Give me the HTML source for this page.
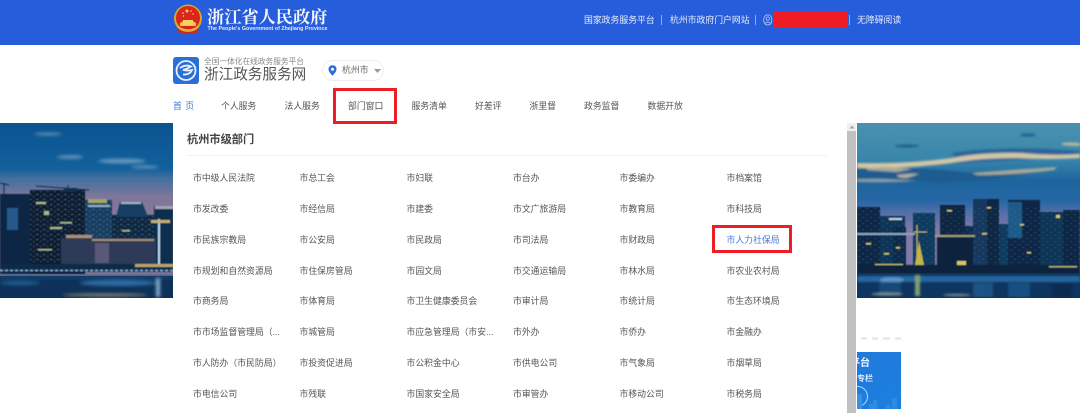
<!DOCTYPE html>
<html lang="zh-CN">
<head>
<meta charset="utf-8">
<title>浙江政务服务网</title>
<style>
html,body{margin:0;padding:0;background:#fff}
body{width:1080px;height:413px;overflow:hidden;position:relative;font-family:"Liberation Sans","Noto Sans CJK SC",sans-serif;color:#555}
.a{position:absolute;white-space:nowrap;line-height:1}
#head{position:absolute;left:0;top:0;width:1080px;height:45px;background:#265ddb}
.w{color:#e6edfb;font-size:8.85px;filter:blur(.3px)}
.sep{position:absolute;width:1px;height:10px;top:15px;background:#8fb0ee}
.n{font-size:8.85px;top:101.5px;color:#555;filter:blur(.3px)}
.c{font-size:8.85px;color:#555;filter:blur(.3px)}
#drop{position:absolute;left:173px;top:123px;width:674px;height:290px;background:#fff}
#grid{position:absolute;left:0;top:1px;width:1080px;height:412px}
.box{position:absolute;border:3px solid #ee1c25;box-sizing:border-box}
svg{position:absolute;display:block}
</style>
</head>
<body>

<!-- card behind the dropdown, right side -->
<div class="a" style="left:861px;top:337px;width:6px;height:3px;background:#e8ecf0"></div>
<div class="a" style="left:872px;top:337px;width:6px;height:3px;background:#e8ecf0"></div>
<div class="a" style="left:883px;top:337px;width:7px;height:3px;background:#e8ecf0"></div>
<div class="a" style="left:895px;top:337px;width:6px;height:3px;background:#e8ecf0"></div>
<div class="a" style="left:857px;top:352px;width:44px;height:57px;background:linear-gradient(135deg,#2279dc,#1a80dd);overflow:hidden">
  <div class="a" style="left:-7px;top:7px;font-size:10px;font-weight:bold;color:#eef6ff;filter:blur(.3px)">平台</div>
  <div class="a" style="left:0;top:23px;font-size:8px;font-weight:bold;color:#e0eeff;filter:blur(.3px)">专栏</div>
  <div class="a" style="left:-10px;top:34px;width:19px;height:19px;border:1px solid #b8d8f8;border-radius:50%"></div>
  <div class="a" style="left:0;top:42px;width:5px;height:15px;background:#3a90e4"></div>
  <div class="a" style="left:12px;top:52px;width:4px;height:5px;background:#2f8ae2"></div>
  <div class="a" style="left:16px;top:48px;width:4px;height:9px;background:#2f8ae2"></div>
  <div class="a" style="left:29px;top:53px;width:4px;height:4px;background:#2f8ae2"></div>
  <div class="a" style="left:35px;top:46px;width:5px;height:11px;background:#2f8ae2"></div>
</div>

<!-- left banner -->
<svg style="left:0;top:123px" width="173" height="175" viewBox="0 0 173 175">
  <defs>
    <linearGradient id="sl" x1="0" y1="0" x2="0" y2="1">
      <stop offset="0" stop-color="#0b5390"/><stop offset=".26" stop-color="#13609c"/>
      <stop offset=".32" stop-color="#44709f"/><stop offset=".42" stop-color="#7e769b"/>
      <stop offset=".56" stop-color="#8a7896"/>
    </linearGradient>
    <pattern id="pw" width="7" height="5" patternUnits="userSpaceOnUse">
      <rect x="1" y="1" width="2.5" height="1" fill="#5d86a0" opacity=".55"/>
      <rect x="5" y="3" width="1.5" height="1" fill="#85a08c" opacity=".4"/>
    </pattern>
    <filter id="b1"><feGaussianBlur stdDeviation=".55"/></filter>
    <filter id="b3"><feGaussianBlur stdDeviation="1.6"/></filter>
  </defs>
  <rect width="173" height="175" fill="url(#sl)"/>
  <g filter="url(#b3)" fill="#79a6c4" opacity=".8">
    <ellipse cx="48" cy="11" rx="14" ry="1.4"/>
    <ellipse cx="70" cy="34" rx="13" ry="1.8"/>
    <ellipse cx="122" cy="38" rx="24" ry="2.4"/>
    <ellipse cx="145" cy="44" rx="14" ry="1.4"/>
  </g>
  <g filter="url(#b1)">
    <path d="M0 60 L9 62 M4 60V74 M36 63 L89 67 M68 62V70" stroke="#14304e" stroke-width="1.1" fill="none"/>
    <rect x="0" y="71" width="30" height="80" fill="#0b2845"/>
    <rect x="7" y="85" width="11" height="22" fill="#27598a"/>
    <rect x="30" y="67" width="55" height="84" fill="#091a32"/>
    <rect x="30" y="67" width="55" height="84" fill="url(#pw)"/>
    <rect x="64" y="65" width="13" height="4" fill="#10304f"/>
    <rect x="85" y="77" width="27" height="70" fill="#123d62"/>
    <rect x="85" y="77" width="27" height="70" fill="url(#pw)"/>
    <rect x="88" y="76" width="19" height="4" fill="#a5a56a"/>
    <rect x="88" y="82" width="22" height="2" fill="#8eaec4"/>
    <rect x="112" y="92" width="43" height="56" fill="#0c2743"/>
    <rect x="112" y="92" width="43" height="56" fill="url(#pw)"/>
    <path d="M116 94 L120 79 H142 L148 94Z" fill="#173e64"/>
    <rect x="121" y="79" width="20" height="2" fill="#9fb4c8"/>
    <rect x="154" y="83" width="19" height="65" fill="#0c2e4e"/>
    <rect x="155" y="83" width="18" height="3" fill="#a7a2b5"/>
    <rect x="61" y="115" width="95" height="26" fill="#2f3a58"/>
    <rect x="66" y="112" width="26" height="3" fill="#ab9070"/>
    <rect x="92" y="116" width="62" height="2" fill="#a28f73"/>
    <rect x="95" y="120" width="14" height="20" fill="#5a5878"/>
    <rect x="158" y="96" width="2" height="46" fill="#b6d4e8"/>
    <rect x="151" y="97" width="19" height="3" fill="#c4ae76"/>
    <g fill="#a8b58a">
      <rect x="36" y="79" width="10" height="2"/><rect x="44" y="88" width="5" height="4"/>
      <rect x="50" y="104" width="12" height="2"/><rect x="60" y="99" width="12" height="1.5"/>
      <rect x="38" y="126" width="14" height="1.5"/><rect x="122" y="107" width="8" height="1.5"/>
    </g>
    <rect y="141" width="173" height="8" fill="#0c2a49"/>
    <rect x="135" y="141" width="38" height="3" fill="#b9a368"/>
    <path d="M0 147.5H173" stroke="#88b1d6" stroke-width="1.6" stroke-dasharray="3 2"/>
    <path d="M0 151.5H173" stroke="#3f76a6" stroke-width="1" stroke-dasharray="2 3"/>
  </g>
  <rect y="153" width="173" height="22" fill="#0d3158"/>
  <g filter="url(#b3)">
    <ellipse cx="118" cy="160" rx="38" ry="3" fill="#2f6da5"/>
    <ellipse cx="105" cy="172" rx="42" ry="1.5" fill="#8a8472"/>
    <rect x="156" y="153" width="4" height="21" fill="#86aed0"/>
    <ellipse cx="20" cy="160" rx="20" ry="2" fill="#24609a"/>
    <rect x="0" y="153" width="173" height="3" fill="#134372"/>
  </g>
</svg>

<!-- right banner -->
<svg style="left:857px;top:123px" width="223" height="175" viewBox="0 0 223 175">
  <defs>
    <linearGradient id="sr" x1="0" y1="0" x2="0" y2="1">
      <stop offset="0" stop-color="#4b91ae"/><stop offset=".2" stop-color="#3a87ab"/>
      <stop offset=".33" stop-color="#1c659d"/><stop offset=".44" stop-color="#2566a4"/>
      <stop offset=".52" stop-color="#586fa9"/><stop offset=".62" stop-color="#8379a8"/>
    </linearGradient>
    <pattern id="pr" width="8" height="6" patternUnits="userSpaceOnUse">
      <rect x="1" y="1" width="2.5" height="1" fill="#4f7d9f" opacity=".5"/>
      <rect x="5" y="4" width="2" height="1" fill="#8a9d87" opacity=".4"/>
    </pattern>
    <filter id="c1"><feGaussianBlur stdDeviation=".55"/></filter>
    <filter id="c2"><feGaussianBlur stdDeviation="1.1"/></filter>
  </defs>
  <rect width="223" height="175" fill="url(#sr)"/>
  <g filter="url(#c2)">
    <path d="M95 30 Q150 22 223 28 V34 L100 40Z" fill="#2a6599"/>
    <path d="M0 45 Q60 43 110 50 Q150 50 200 44 L165 52 Q100 62 60 58 Q20 60 0 58Z" fill="#1f5b90"/>
    <path d="M0 40 Q50 41 95 35 Q125 29 165 30 Q195 33 223 31 V35 Q190 37 160 35 Q120 35 95 40 Q50 46 0 45Z" fill="#d3c7a6"/>
    <path d="M205 20 Q214 19 223 20 V23 Q214 23 205 22Z" fill="#b7b79e"/>
    <path d="M10 45 Q30 43 55 46 L40 49 Q22 48 10 47Z" fill="#a9a99c"/>
    <path d="M40 52 Q55 50 62 51 L50 55 Q42 55 40 53Z" fill="#b3ad9c"/>
    <path d="M115 50 Q150 47 200 44 L197 47 Q160 52 120 52Z" fill="#a8a998"/>
    <path d="M0 56 Q30 55 60 58 Q30 60 0 59Z" fill="#8a9ba6"/>
    <ellipse cx="50" cy="23" rx="12" ry="1.2" fill="#1b5686"/>
    <ellipse cx="171" cy="12" rx="8" ry="1.6" fill="#24628f"/>
  </g>
  <g filter="url(#c1)">
    <rect x="0" y="84" width="23" height="62" fill="#0b2846"/>
    <rect x="23" y="93" width="25" height="53" fill="#0f3558"/>
    <rect x="36" y="104" width="13" height="42" fill="#0c2c4b"/>
    <rect x="32" y="95" width="13" height="2" fill="#bcd3e4"/>
    <rect x="56" y="90" width="22" height="56" fill="#0f3b60"/>
    <rect x="83" y="82" width="25" height="64" fill="#0a2543"/>
    <rect x="108" y="103" width="9" height="43" fill="#0c2d4e"/>
    <rect x="116" y="76" width="26" height="70" fill="#12395e"/>
    <rect x="130" y="76" width="12" height="70" fill="#0b2743"/>
    <rect x="142" y="101" width="10" height="45" fill="#0f3a60"/>
    <rect x="151" y="77" width="32" height="69" fill="#0b2746"/>
    <rect x="151" y="79" width="14" height="36" fill="#1a5a8a"/>
    <rect x="183" y="89" width="23" height="57" fill="#0d3556"/>
    <rect x="206" y="87" width="17" height="59" fill="#0a2745"/>
    <rect x="0" y="84" width="223" height="62" fill="url(#pr)" opacity=".6"/>
    <rect x="0" y="110" width="58" height="2" fill="#8aa6bc"/>
    <rect x="80" y="113" width="36" height="33" fill="#09203c"/>
    <rect x="78" y="112" width="40" height="2" fill="#9e9c78"/>
    <path d="M60 102V144M57 109H70" stroke="#bdb366" stroke-width="1"/>
    <path d="M62 118L67 142H58Z" fill="#c2b648"/>
    <g fill="#d4c56c">
      <rect x="9" y="120" width="5" height="1.6"/><rect x="27" y="130" width="5" height="1.6"/><rect x="39" y="124" width="4" height="1.6"/>
      <rect x="90" y="87" width="5" height="1.5"/><rect x="130" y="84" width="4" height="1.5"/><rect x="163" y="101" width="4" height="1.5"/>
      <rect x="199" y="92" width="4" height="3"/><rect x="100" y="138" width="9" height="5"/><rect x="18" y="141" width="28" height="1.5"/>
      <rect x="125" y="110" width="5" height="1.5"/><rect x="170" y="129" width="4" height="1.5"/>
    </g>
    <rect y="142" width="223" height="9" fill="#09203e"/>
    <rect x="192" y="143" width="28" height="1.5" fill="#a9a96f"/>
  </g>
  <rect y="150" width="223" height="25" fill="#0d3560"/>
  <g filter="url(#c2)">
    <rect y="153" width="223" height="6" fill="#26669f"/>
    <ellipse cx="35" cy="157" rx="12" ry="3" fill="#5a92c6"/>
    <rect x="58" y="152" width="5" height="21" fill="#7f9f6e"/>
    <rect x="22" y="159" width="22" height="14" fill="#144878"/>
    <ellipse cx="30" cy="171" rx="16" ry="1.4" fill="#7a8a8e"/>
    <ellipse cx="100" cy="172" rx="14" ry="1.4" fill="#6a7e8e"/>
    <rect x="116" y="160" width="20" height="14" fill="#1a5282"/>
    <rect x="151" y="160" width="22" height="14" fill="#195080"/>
    <rect x="195" y="160" width="20" height="14" fill="#0b2b50"/>
  </g>
</svg>

<!-- header -->
<div id="head"></div>
<svg style="left:173px;top:4px" width="30" height="32" viewBox="0 0 30 32">
  <circle cx="15" cy="14.5" r="14" fill="#d8a52e"/>
  <circle cx="15" cy="14" r="12" fill="#d9251c"/>
  <path d="M7 19 Q15 13 23 19 V22 H7Z" fill="#f0c548"/>
  <rect x="10" y="16" width="10" height="5" fill="#f3d264"/>
  <g fill="#f7d54a"><circle cx="14" cy="7" r="1.5"/><circle cx="10" cy="9" r=".9"/><circle cx="18" cy="7" r=".8"/><circle cx="20" cy="10" r=".8"/><circle cx="10.5" cy="12" r=".8"/></g>
  <path d="M4 24 Q15 32 26 24 L24 29 H6Z" fill="#c8281e"/>
  <path d="M5 23 Q15 29 25 23" stroke="#e5b73d" stroke-width="1.5" fill="none"/>
</svg>
<div class="a" style="left:207px;top:7px;font-family:'Noto Serif CJK SC','Liberation Serif',serif;font-size:17.2px;font-weight:700;color:#f3f6fd;filter:blur(.25px)">浙江省人民政府</div>
<div class="a" style="left:207.5px;top:27px;font-size:5.3px;font-weight:bold;color:#e4ebfb;letter-spacing:.03px;filter:blur(.2px)">The People's Government of Zhejiang Province</div>

<div class="a w" style="left:584px;top:16px">国家政务服务平台</div>
<div class="sep" style="left:661px"></div>
<div class="a w" style="left:670px;top:16px">杭州市政府门户网站</div>
<div class="sep" style="left:755px"></div>
<svg style="left:763px;top:14px" width="10" height="12" viewBox="0 0 10 12" fill="none" stroke="#b9cdf5" stroke-width=".8">
  <rect x=".8" y=".8" width="8" height="10.2" rx="4"/>
  <circle cx="4.8" cy="4.6" r="1.7"/>
  <path d="M2.2 9.3 Q4.8 6.8 7.4 9.3"/>
</svg>
<div class="a" style="left:774px;top:12px;width:73px;height:15px;background:#ee1c25"></div>
<div class="sep" style="left:849px"></div>
<div class="a w" style="left:857px;top:16px">无障碍阅读</div>

<!-- site title -->
<svg style="left:173px;top:57px" width="26" height="27" viewBox="0 0 26 27">
  <rect width="26" height="27" rx="3" fill="#2a6fd6"/>
  <ellipse cx="13" cy="13.5" rx="9.5" ry="9.5" fill="none" stroke="#eaf2ff" stroke-width="1.8"/>
  <path d="M7 11 Q13 7 18 9.5 Q14 12 10 13 Q15 14 19 13 Q17 18 10 17.5" fill="none" stroke="#eaf2ff" stroke-width="1.8"/>
</svg>
<div class="a" style="left:204px;top:58px;font-size:7.7px;color:#888;filter:blur(.3px)">全国一体化在线政务服务平台</div>
<div class="a" style="left:204px;top:68px;font-size:14.6px;color:#555;filter:blur(.25px)">浙江政务服务网</div>
<div class="a" style="left:322px;top:60px;width:62px;height:21px;box-sizing:border-box;border:1px solid #eee;border-radius:11px;background:#fff"></div>
<svg style="left:328px;top:65px" width="9" height="11" viewBox="0 0 9 11">
  <path d="M4.5 0.3 C7 0.3 8.5 2 8.5 4.2 C8.5 6.8 5.8 9 4.5 10.7 C3.2 9 .5 6.8 .5 4.2 C.5 2 2 .3 4.5 .3Z" fill="#2a6fd6"/>
  <circle cx="4.5" cy="4.2" r="1.5" fill="#fff"/>
</svg>
<div class="a" style="left:342px;top:66px;font-size:8.85px;color:#666;filter:blur(.3px)">杭州市</div>
<svg style="left:374px;top:69px" width="7" height="4" viewBox="0 0 7 4"><path d="M0 0H7L3.5 4Z" fill="#999"/></svg>

<!-- nav -->
<div class="a n" style="left:173px;color:#3f78dd;word-spacing:1px">首 页</div>
<div class="a n" style="left:221px">个人服务</div>
<div class="a n" style="left:284.5px">法人服务</div>
<div class="a n" style="left:348px">部门窗口</div>
<div class="a n" style="left:411.5px">服务清单</div>
<div class="a n" style="left:475px">好差评</div>
<div class="a n" style="left:529.5px">浙里督</div>
<div class="a n" style="left:584px">政务监督</div>
<div class="a n" style="left:647.5px">数据开放</div>

<!-- dropdown -->
<div id="drop">
  <div class="a" style="left:14px;top:12px;font-size:11.2px;font-weight:bold;color:#444;filter:blur(.25px)">杭州市级部门</div>
  <div class="a" style="left:14px;top:32px;width:640px;height:1px;background:#f2f2f2"></div>
</div>

<!-- scrollbar -->
<div class="a" style="left:847px;top:123px;width:9px;height:290px;background:#f1f1f1"></div>
<div class="a" style="left:847px;top:131px;width:9px;height:282px;background:#c1c1c1"></div>
<svg style="left:849px;top:125px" width="6" height="4" viewBox="0 0 6 4"><path d="M3 .5L5.5 3.5H.5Z" fill="#a3a3a3"/></svg>

<!-- grid -->
<div id="grid">
<div class="a c" style="left:193px;top:173px">市中级人民法院</div>
<div class="a c" style="left:299.5px;top:173px">市总工会</div>
<div class="a c" style="left:406.5px;top:173px">市妇联</div>
<div class="a c" style="left:513px;top:173px">市台办</div>
<div class="a c" style="left:619.5px;top:173px">市委编办</div>
<div class="a c" style="left:726.5px;top:173px">市档案馆</div>

<div class="a c" style="left:193px;top:204px">市发改委</div>
<div class="a c" style="left:299.5px;top:204px">市经信局</div>
<div class="a c" style="left:406.5px;top:204px">市建委</div>
<div class="a c" style="left:513px;top:204px">市文广旅游局</div>
<div class="a c" style="left:619.5px;top:204px">市教育局</div>
<div class="a c" style="left:726.5px;top:204px">市科技局</div>

<div class="a c" style="left:193px;top:235px">市民族宗教局</div>
<div class="a c" style="left:299.5px;top:235px">市公安局</div>
<div class="a c" style="left:406.5px;top:235px">市民政局</div>
<div class="a c" style="left:513px;top:235px">市司法局</div>
<div class="a c" style="left:619.5px;top:235px">市财政局</div>
<div class="a c" style="left:726.5px;top:235px;color:#4a78dc">市人力社保局</div>

<div class="a c" style="left:193px;top:266px">市规划和自然资源局</div>
<div class="a c" style="left:299.5px;top:266px">市住保房管局</div>
<div class="a c" style="left:406.5px;top:266px">市园文局</div>
<div class="a c" style="left:513px;top:266px">市交通运输局</div>
<div class="a c" style="left:619.5px;top:266px">市林水局</div>
<div class="a c" style="left:726.5px;top:266px">市农业农村局</div>

<div class="a c" style="left:193px;top:296px">市商务局</div>
<div class="a c" style="left:299.5px;top:296px">市体育局</div>
<div class="a c" style="left:406.5px;top:296px">市卫生健康委员会</div>
<div class="a c" style="left:513px;top:296px">市审计局</div>
<div class="a c" style="left:619.5px;top:296px">市统计局</div>
<div class="a c" style="left:726.5px;top:296px">市生态环境局</div>

<div class="a c" style="left:193px;top:327px">市市场监督管理局（...</div>
<div class="a c" style="left:299.5px;top:327px">市城管局</div>
<div class="a c" style="left:406.5px;top:327px">市应急管理局（市安...</div>
<div class="a c" style="left:513px;top:327px">市外办</div>
<div class="a c" style="left:619.5px;top:327px">市侨办</div>
<div class="a c" style="left:726.5px;top:327px">市金融办</div>

<div class="a c" style="left:193px;top:358px">市人防办（市民防局）</div>
<div class="a c" style="left:299.5px;top:358px">市投资促进局</div>
<div class="a c" style="left:406.5px;top:358px">市公积金中心</div>
<div class="a c" style="left:513px;top:358px">市供电公司</div>
<div class="a c" style="left:619.5px;top:358px">市气象局</div>
<div class="a c" style="left:726.5px;top:358px">市烟草局</div>

<div class="a c" style="left:193px;top:389px">市电信公司</div>
<div class="a c" style="left:299.5px;top:389px">市残联</div>
<div class="a c" style="left:406.5px;top:389px">市国家安全局</div>
<div class="a c" style="left:513px;top:389px">市审管办</div>
<div class="a c" style="left:619.5px;top:389px">市移动公司</div>
<div class="a c" style="left:726.5px;top:389px">市税务局</div>
</div>

<!-- red highlight boxes -->
<div class="box" style="left:333px;top:88px;width:64px;height:36px"></div>
<div class="box" style="left:712px;top:225px;width:80px;height:28px"></div>

</body>
</html>
